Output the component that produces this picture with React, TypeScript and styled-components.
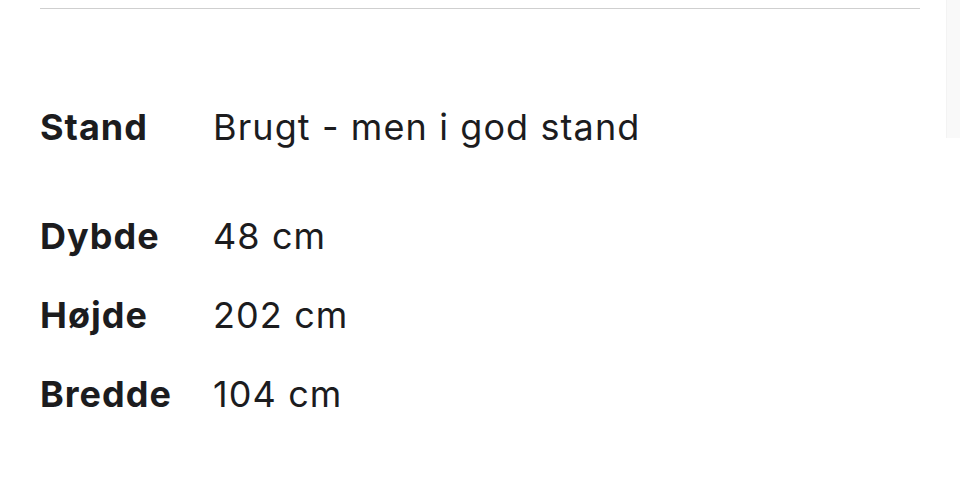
import React from "react";
import styled, { createGlobalStyle } from "styled-components";

const Global = createGlobalStyle`
  html, body { margin: 0; padding: 0; background: #ffffff; }
  body { font-family: Inter, "Noto Sans", "Liberation Sans", sans-serif; color: #1c1c1e; overflow: hidden; }
`;

const Page = styled.div`
  display: flex;
  width: 960px;
  height: 502px;
  overflow: hidden;
`;

const Main = styled.main`
  flex: 1;
  padding: 8px 26px 0 40px;
  display: flex;
  flex-direction: column;
`;

const Side = styled.aside`
  width: 13px;
  height: 138px;
  background: #f9f9f9;
  border-left: 1px solid #f3f3f3;
`;

const Divider = styled.hr`
  margin: 0;
  border: 0;
  border-top: 1px solid #cfcfcf;
`;

const Specs = styled.dl`
  margin: 94px 0 0;
  display: grid;
  grid-template-columns: 173px 1fr;
  row-gap: 31px;
`;

const Term = styled.dt<{ $extra?: boolean }>`
  margin: 0 0 ${(p) => (p.$extra ? "30px" : "0")};
  font-size: 36px;
  line-height: 48px;
  font-weight: 700;
  letter-spacing: 1px;
`;

const Value = styled.dd<{ $extra?: boolean }>`
  margin: 0 0 ${(p) => (p.$extra ? "30px" : "0")};
  font-size: 36px;
  line-height: 48px;
  font-weight: 400;
  letter-spacing: 1.1px;
`;

const Heading = styled.h2`
  margin: 84px 0 0;
  font-size: 40px;
  line-height: 48px;
  font-weight: 700;
  letter-spacing: 1px;
`;

const rows = [
  { label: "Stand", value: "Brugt - men i god stand" },
  { label: "Dybde", value: "48 cm" },
  { label: "Højde", value: "202 cm" },
  { label: "Bredde", value: "104 cm" },
];

export default function App() {
  return (
    <>
      <Global />
      <Page>
        <Main>
          <Divider />
          <Specs>
            {rows.map((r, i) => (
              <React.Fragment key={r.label}>
                <Term $extra={i === 0}>{r.label}</Term>
                <Value $extra={i === 0}>{r.value}</Value>
              </React.Fragment>
            ))}
          </Specs>
          <Heading>Beskrivelse</Heading>
        </Main>
        <Side />
      </Page>
    </>
  );
}
